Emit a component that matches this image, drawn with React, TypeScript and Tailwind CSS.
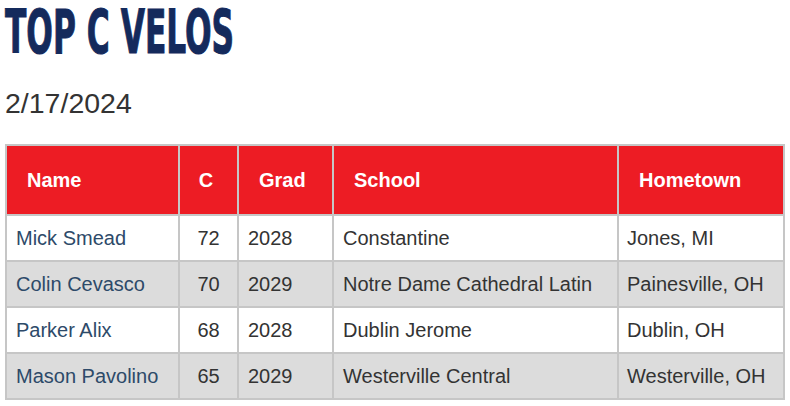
import React from 'react';

const rows = [
  { name: 'Mick Smead', c: 72, grad: 2028, school: 'Constantine', town: 'Jones, MI' },
  { name: 'Colin Cevasco', c: 70, grad: 2029, school: 'Notre Dame Cathedral Latin', town: 'Painesville, OH' },
  { name: 'Parker Alix', c: 68, grad: 2028, school: 'Dublin Jerome', town: 'Dublin, OH' },
  { name: 'Mason Pavolino', c: 65, grad: 2029, school: 'Westerville Central', town: 'Westerville, OH' },
];

const App = () => {
  return (
    <div className="w-[790px] h-[406px] bg-white pl-[5px] overflow-hidden font-['Liberation_Sans',Arial,sans-serif]">
      {/* Title */}
      <h1 className="pt-[2px] leading-[60px] text-[60px] font-bold text-[#142a5c] font-['DejaVu_Sans_Condensed','DejaVu_Sans',sans-serif] whitespace-nowrap">
        <span className="inline-block origin-left scale-x-[0.58] [-webkit-text-stroke:1px_#142a5c]">TOP C VELOS</span>
      </h1>

      {/* Date */}
      <p className="mt-[27px] text-[28.5px] leading-[28px] text-[#333333]">2/17/2024</p>

      {/* Table */}
      <div className="mt-[27px] w-[780px] grid grid-cols-[171px_57px_93px_283px_164px] gap-[2px] p-[2px] bg-[#c6c6c6] text-[20px]">
        <div className="h-[68px] bg-[#ed1c24] text-white font-bold flex items-center pl-[20px]">Name</div>
        <div className="h-[68px] bg-[#ed1c24] text-white font-bold flex items-center justify-center pr-[5px]">C</div>
        <div className="h-[68px] bg-[#ed1c24] text-white font-bold flex items-center pl-[20px]">Grad</div>
        <div className="h-[68px] bg-[#ed1c24] text-white font-bold flex items-center pl-[20px]">School</div>
        <div className="h-[68px] bg-[#ed1c24] text-white font-bold flex items-center pl-[20px]">Hometown</div>

        {rows.map((r, i) => {
          const bg = i % 2 === 0 ? 'bg-white' : 'bg-[#dcdcdc]';
          return (
            <React.Fragment key={r.name}>
              <div className={`${bg} h-[44px] flex items-center pl-[9px] text-[#2d4a69]`}>{r.name}</div>
              <div className={`${bg} h-[44px] flex items-center justify-center text-[#333333]`}>{r.c}</div>
              <div className={`${bg} h-[44px] flex items-center pl-[9px] text-[#333333]`}>{r.grad}</div>
              <div className={`${bg} h-[44px] flex items-center pl-[9px] text-[#333333]`}>{r.school}</div>
              <div className={`${bg} h-[44px] flex items-center pl-[8px] text-[#333333]`}>{r.town}</div>
            </React.Fragment>
          );
        })}
      </div>
    </div>
  );
};

export default App;
